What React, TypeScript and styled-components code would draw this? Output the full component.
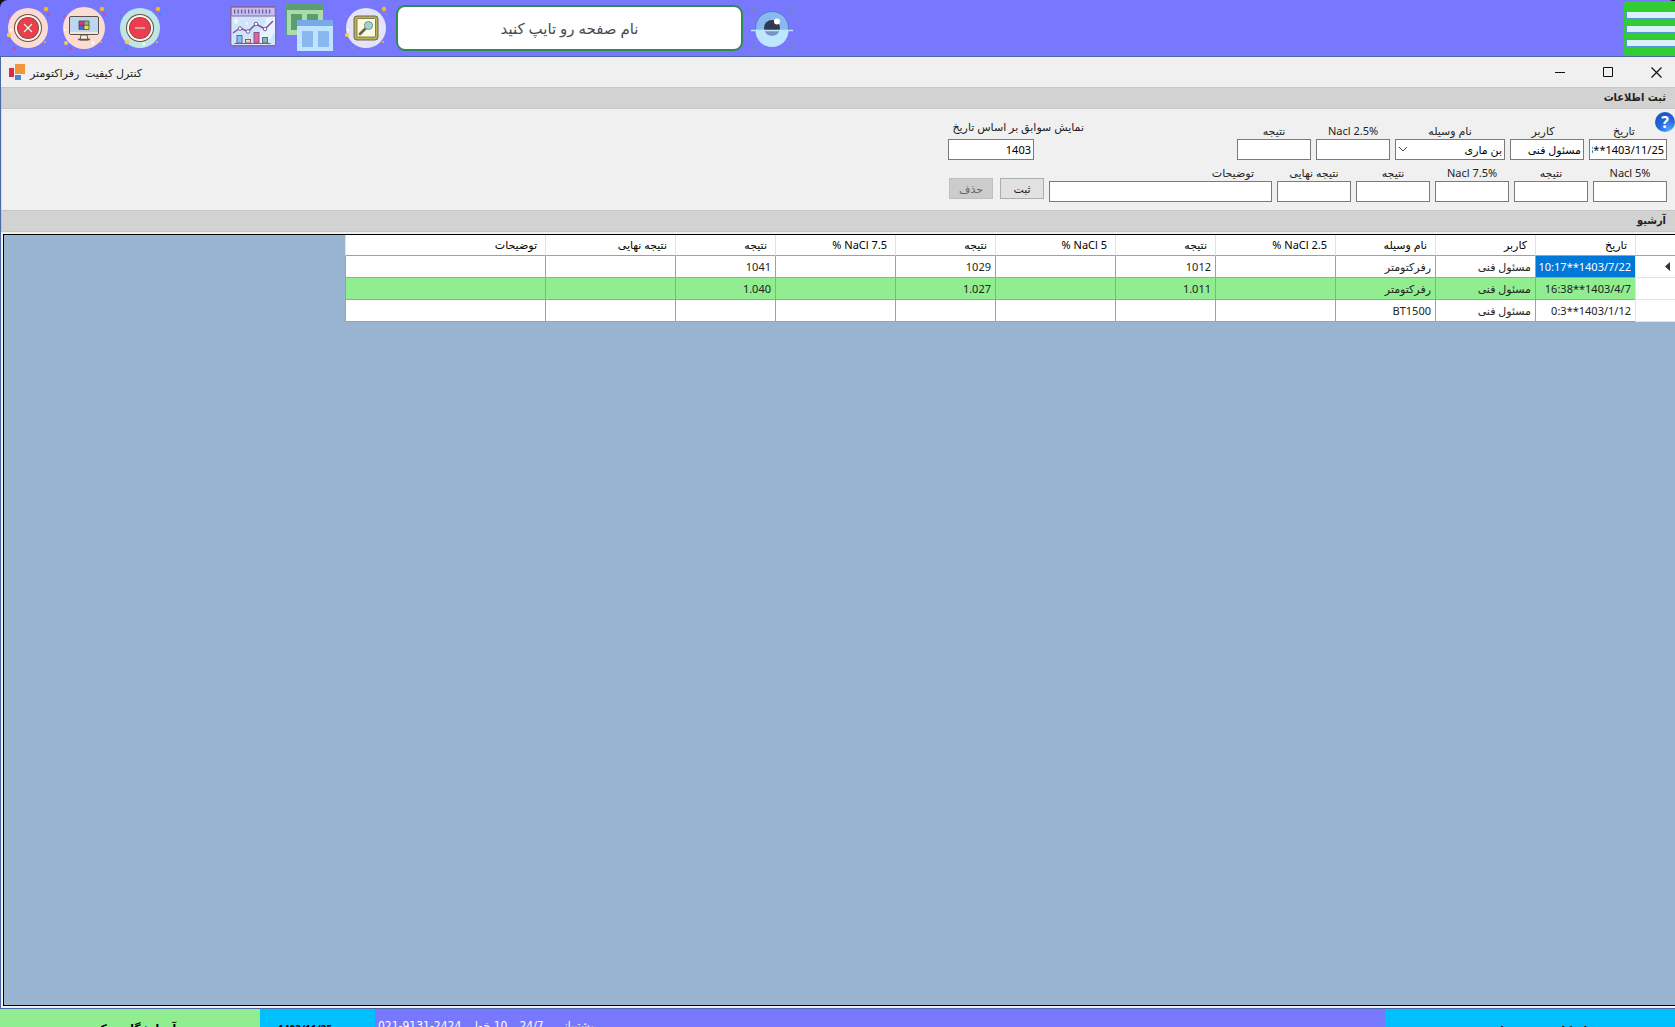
import React from "react";
import styled, { createGlobalStyle } from "styled-components";

const GlobalStyle = createGlobalStyle`
  *, *::before, *::after { box-sizing: border-box; }
  body { margin: 0; background: #111; overflow: hidden; }
  body, button, input, select, table {
    font-family: "Noto Sans", "DejaVu Sans", sans-serif;
    font-size: 11px;
  }
  button { cursor: pointer; }
`;

const Page = styled.div`
  display: flex;
  flex-direction: column;
  height: 100vh;
  overflow: hidden;
`;

/* ---------- top launcher bar ---------- */

const TopBar = styled.header`
  display: flex;
  align-items: center;
  flex: 0 0 56px;
  padding-left: 4px;
  background: #7878ff;
  border-radius: 8px 6px 0 0;
`;

const IconGroup = styled.div<{ $before?: number }>`
  display: flex;
  align-items: center;
  gap: 8px;
  margin-left: ${(p) => p.$before ?? 0}px;
`;

const IconButton = styled.button`
  display: flex;
  padding: 0;
  border: 0;
  background: none;
`;

const PageSearch = styled.input`
  width: 347px;
  height: 46px;
  border: 2px solid #2e8b57;
  border-radius: 9px;
  background: #fff;
  text-align: center;
  font-size: 15px;
  color: #444;
  outline: 0;
  &::placeholder { color: #4a4a4a; opacity: 1; }
`;

const MenuButton = styled.button`
  display: flex;
  flex-direction: column;
  justify-content: center;
  gap: 6px;
  width: 51px;
  height: 55px;
  margin: 1px 0 0 auto;
  padding: 0 0 0 2px;
  border: 0;
  border-radius: 4px 0 0 4px;
  background: #32cd32;
`;

const MenuBar = styled.span`
  height: 8px;
  border: 1px solid #4f9bd0;
  border-right: 0;
  background: #dceffc;
`;

/* ---------- window ---------- */

const Window = styled.main`
  display: flex;
  flex-direction: column;
  flex: 1;
  min-height: 0;
  border: 1px solid #4b6aa5;
  border-right: 0;
  background: #f0f0f0;
`;

const TitleBar = styled.div`
  display: flex;
  align-items: center;
  flex: 0 0 30px;
  padding-left: 8px;
  gap: 5px;
`;

const Title = styled.h1`
  margin: 0;
  font-size: 11px;
  font-weight: 400;
  white-space: pre;
  color: #222;
`;

const Caption = styled.div`
  display: flex;
  gap: 10px;
  margin-left: auto;
`;

const CaptionButton = styled.button`
  display: flex;
  align-items: center;
  justify-content: center;
  width: 38px;
  height: 30px;
  padding: 0;
  border: 0;
  background: none;
`;

const SectionHeader = styled.h2`
  flex: none;
  height: 22px;
  margin: 0;
  padding: 0 9px 0 0;
  border: 1px solid #c6c6c6;
  border-right: 0;
  background: #d2d2d2;
  color: #222;
  font-family: "DejaVu Sans Condensed", "DejaVu Sans", sans-serif;
  font-size: 11px;
  line-height: 20px;
  font-weight: 700;
`;

const EntryForm = styled.form`
  position: relative;
  display: flex;
  flex-direction: column;
  gap: 4px;
  flex: none;
  padding: 6px 8px 8px 0;
  border-left: 1px solid #dcdcdc;
`;

const FormRow = styled.div`
  display: flex;
  align-items: flex-end;
  gap: 5px;
`;

const Field = styled.div<{ $width: number; $align?: string }>`
  display: flex;
  flex-direction: column;
  width: ${(p) => p.$width}px;
  text-align: ${(p) => p.$align ?? "center"};
`;

const Label = styled.label<{ $inset?: number }>`
  padding-right: ${(p) => p.$inset ?? 0}px;
  height: 17px;
  line-height: 17px;
  color: #222;
  white-space: nowrap;
`;

const TextBox = styled.input`
  width: 100%;
  height: 21px;
  padding: 0 2px;
  border: 1px solid #7a7a7a;
  background: #fff;
  color: #000;
  outline: 0;
`;

const SelectWrap = styled.div`
  position: relative;
  display: flex;
`;

const Select = styled.select`
  appearance: none;
  width: 100%;
  height: 21px;
  padding: 0 2px;
  border: 1px solid #7a7a7a;
  border-radius: 0;
  background: #fff;
  color: #000;
`;

const SelectArrow = styled.svg`
  position: absolute;
  left: 3px;
  top: 7px;
  pointer-events: none;
`;

const YearField = styled.div`
  display: flex;
  flex-direction: column;
  align-items: flex-end;
  width: 136px;
  margin-right: 148px;
`;

const YearLabel = styled(Label)`
  align-self: flex-start;
  height: 24px;
  line-height: 24px;
`;

const YearBox = styled(TextBox)`
  width: 86px;
`;

const FormActions = styled.div`
  display: flex;
  gap: 7px;
  padding-bottom: 3px;
`;

const ActionButton = styled.button`
  width: 44px;
  height: 21px;
  padding: 0;
  border: 1px solid #adadad;
  background: #e1e1e1;
  color: #222;
  &:disabled {
    border-color: #bfbfbf;
    background: #cccccc;
    color: #666;
  }
`;

const HelpButton = styled.button`
  position: absolute;
  top: 3px;
  right: 0;
  width: 20px;
  height: 20px;
  padding: 0;
  border: 0;
  border-radius: 50%;
  background: radial-gradient(circle at 70% 90%, #4aa8ff 0%, #2468dc 45%, #1848b8 100%);
  color: #fff;
  font-size: 16px;
  line-height: 20px;
  font-weight: 700;
`;

/* ---------- archive grid ---------- */

const GridFrame = styled.section`
  flex: 1;
  min-height: 0;
  margin: 2px 0 2px 2px;
  border: 1px solid #000;
  border-right: 0;
  background: #99b4d1;
  overflow: hidden;
`;

const Grid = styled.table`
  width: 1330px;
  table-layout: fixed;
  border-collapse: separate;
  border-spacing: 0;
  background: #fff;
  line-height: 16px;
`;

const HeadCell = styled.th`
  height: 21px;
  padding: 0 8px 0 0;
  border-left: 1px solid #e2e2e2;
  border-bottom: 1px solid #a0a0a0;
  font-weight: 400;
  text-align: right;
  color: #000;
`;

const Row = styled.tr<{ $green?: boolean }>`
  background: ${(p) => (p.$green ? "#90ee90" : "#fff")};
`;

const RowHead = styled.th`
  height: 22px;
  padding: 0 5px 0 0;
  background: #fff;
  border-left: 1px solid #e2e2e2;
  border-bottom: 1px solid #e2e2e2;
  text-align: right;
`;

const Cell = styled.td<{ $selected?: boolean }>`
  height: 22px;
  padding: 0 4px 0 0;
  border-left: 1px solid #a0a0a0;
  border-bottom: 1px solid #a0a0a0;
  background: ${(p) => (p.$selected ? "#0078d7" : "transparent")};
  color: ${(p) => (p.$selected ? "#fff" : "#222")};
  text-align: right;
  white-space: nowrap;
`;

/* ---------- status strip ---------- */

const StatusBar = styled.footer`
  display: flex;
  flex: 0 0 18px;
  overflow: hidden;
  font-family: "DejaVu Sans Condensed", "DejaVu Sans", sans-serif;
`;

const StatusPanel = styled.div<{ $width?: number; $color: string; $top?: number }>`
  display: flex;
  flex: ${(p) => (p.$width ? `0 0 ${p.$width}px` : "1")};
  align-items: flex-start;
  justify-content: center;
  height: 40px;
  padding-top: ${(p) => p.$top ?? 12}px;
  background: ${(p) => p.$color};
  color: #000;
  font-size: 12px;
  line-height: 16px;
  font-weight: 700;
  white-space: nowrap;
`;

const DatePanel = styled(StatusPanel)`
  justify-content: flex-start;
  padding-left: 18px;
  font-family: "Noto Sans", sans-serif;
  font-size: 10px;
`;

const SupportPanel = styled(StatusPanel)`
  justify-content: flex-start;
  gap: 12px;
  padding-left: 3px;
  color: #fff;
  font-weight: 400;
`;

/* ---------- drawings ---------- */

const Sparks = ({ a, b }: { a: string; b: string }) => (
  <>
    <circle cx="42" cy="5" r="2.2" fill="#f5b921" />
    <circle cx="44" cy="10" r="1" fill={a} />
    <circle cx="4" cy="12" r="1" fill={a} />
    <circle cx="41" cy="38" r="1.1" fill="#f5b921" />
    <circle cx="10.5" cy="44" r="1" fill={b} />
  </>
);

const CloseIcon = () => (
  <svg width="48" height="48" viewBox="0 0 48 48">
    <circle cx="24" cy="24" r="20" fill="#fadcd2" />
    <circle cx="24" cy="24" r="14" fill="#6b4b45" />
    <circle cx="24" cy="24" r="13" fill="#fff8ea" />
    <circle cx="24" cy="24" r="11" fill="#6b4b45" />
    <circle cx="24" cy="24" r="10.4" fill="#f03a50" />
    <path d="M20 20l8 8M28 20l-8 8" stroke="#6b4b45" strokeWidth="2.4" />
    <path d="M20 20l8 8M28 20l-8 8" stroke="#fff3d8" strokeWidth="1.5" />
    <circle cx="5" cy="31" r="2.2" fill="#fbc94c" />
    <circle cx="7" cy="26" r="1.3" fill="#fff" />
    <Sparks a="#f03a50" b="#f03a50" />
  </svg>
);

const MinusIcon = () => (
  <svg width="48" height="48" viewBox="0 0 48 48">
    <circle cx="24" cy="24" r="20" fill="#bfe5e4" />
    <circle cx="24" cy="24" r="14" fill="#6b4b45" />
    <circle cx="24" cy="24" r="13" fill="#fff8ea" />
    <circle cx="24" cy="24" r="11" fill="#6b4b45" />
    <circle cx="24" cy="24" r="10.4" fill="#f03a50" />
    <path d="M19 24h10" stroke="#c5a99e" strokeWidth="2" />
    <circle cx="11" cy="38" r="2.2" fill="#fbc94c" />
    <circle cx="28" cy="40" r="1.5" fill="#fff" />
    <Sparks a="#1a9aa8" b="#1a9aa8" />
  </svg>
);

const MonitorIcon = () => (
  <svg width="48" height="48" viewBox="0 0 48 48">
    <circle cx="24" cy="24" r="21" fill="#fadcd2" />
    <path d="M21 31h6l1 5h-8z" fill="#f7f2dc" stroke="#6b5550" />
    <path d="M18 35.500h12" stroke="#6b5550" strokeWidth="1.6" />
    <rect x="9.500" y="12.500" width="29" height="18" rx="1.5" fill="#bcd6ee" stroke="#5d4e50" />
    <path d="M10 28h28v2H10z" fill="#eee9dc" />
    <rect x="19" y="17" width="5" height="4" fill="#e7337a" />
    <rect x="24" y="17" width="5" height="4" fill="#7cc36b" />
    <rect x="19" y="21" width="5" height="4" fill="#4a6bd8" />
    <rect x="24" y="21" width="5" height="4" fill="#f3dd48" />
    <path d="M19 17h10v8.500H19zM24 17v8.500M19 21.300h10" fill="none" stroke="#554450" strokeWidth=".8" />
    <circle cx="6" cy="39" r="2.1" fill="#fbc94c" />
    <circle cx="33" cy="39" r="1.4" fill="#fff" />
    <circle cx="5" cy="26" r="1" fill="#fff" />
    <Sparks a="#f03a50" b="#f03a50" />
  </svg>
);

const ChartIcon = () => (
  <svg width="48" height="48" viewBox="0 0 48 48">
    <rect x="0.700" y="2.700" width="45" height="39" rx="1.5" fill="#cfe5fb" stroke="#8568ac" strokeWidth="1.4" />
    <path d="M22 41L40 12h5v16l-9 13z" fill="#e4f3ff" />
    <path d="M1.200 3.200h44V12h-44z" fill="#c5bff0" stroke="#8568ac" />
    <path d="M4 7.500h38" stroke="#705c91" strokeWidth="4" strokeDasharray="1.300 2.200" />
    <path d="M3 29l7-5 8 3.500 8-7.500 9 5 8-8" fill="none" stroke="#8253a0" strokeWidth="1.500" />
    <g fill="#fff" stroke="#8253a0">
      <circle cx="10" cy="24.500" r="1.800" />
      <circle cx="18" cy="27.500" r="1.800" />
      <circle cx="26" cy="20" r="1.800" />
      <circle cx="35" cy="25" r="1.800" />
    </g>
    <g stroke="#8253a0">
      <rect x="7" y="31.500" width="5" height="7.500" fill="#78c9ee" />
      <rect x="15.500" y="35.500" width="5" height="3.500" fill="#f5dc80" />
      <rect x="24" y="28.500" width="5" height="10.500" fill="#ec6287" />
      <rect x="32.500" y="33.500" width="5" height="5.500" fill="#6cc4a4" />
      <path d="M4.500 39.500h36" />
    </g>
    <path d="M6 14v6M3 17h6M17 18v3M37 14v4" stroke="#fff" strokeWidth="1.200" />
  </svg>
);

const WindowsIcon = () => (
  <svg width="48" height="50" viewBox="0 0 48 50">
    <rect x="0" y="1" width="37" height="31" fill="#a8dca8" />
    <rect x="0" y="1" width="37" height="6" fill="#5c9e73" />
    <path d="M0 1h1v31H0z" fill="#5c9e73" />
    <path d="M5 11h11v16H5zM21 11h11v10H21z" fill="#5c9e73" />
    <rect x="11" y="17" width="36" height="31" fill="#bee4ff" />
    <rect x="11" y="17" width="36" height="6" fill="#79a9e8" />
    <path d="M16 28h11v16H16zM32 28h11v16H32z" fill="#8ab7f0" />
  </svg>
);

const FindIcon = () => (
  <svg width="48" height="48" viewBox="0 0 48 48">
    <circle cx="24" cy="24" r="20" fill="#e4e3f7" />
    <rect x="12" y="12" width="24" height="24" rx="3" fill="#b7b257" stroke="#6c6843" />
    <rect x="15" y="14.500" width="18.500" height="18.500" rx="1" fill="#fdf9dc" stroke="#6c6843" strokeWidth=".8" />
    <path d="M18 30l5-5" stroke="#696747" strokeWidth="2.800" strokeLinecap="round" />
    <circle cx="26.500" cy="21.500" r="4" fill="#9dd4d7" stroke="#74908c" />
    <circle cx="5" cy="31" r="2.100" fill="#fbc94c" />
    <circle cx="6" cy="26" r="1.100" fill="#fff" />
    <Sparks a="#9892c5" b="#9892c5" />
  </svg>
);

const EyeIcon = () => (
  <svg width="42" height="42" viewBox="0 0 42 42">
    <path d="M1 7V1h6M35 1h6v6M41 35v6h-6M7 41H1v-6" fill="none" stroke="#6d85bf" strokeWidth="1.600" />
    <circle cx="21" cy="21" r="16.500" fill="#8ab8f1" stroke="#4d7fc2" />
    <circle cx="21" cy="21" r="8" fill="#303c4d" />
    <path d="M4.500 23.500h33a16.500 16.500 0 0 1-33 0z" fill="#bfe6ff" />
    <path d="M13.500 23.500h15a8 8 0 0 1-15 0z" fill="#7195c6" />
    <circle cx="26" cy="14.500" r="3" fill="#fff" />
    <path d="M0 23.500h42" stroke="#bfe6ff" strokeWidth="1.400" />
  </svg>
);

const FormsLogo = () => (
  <svg width="16" height="17" viewBox="0 0 16 17">
    <path d="M0 4h5v9H0z" fill="#d2304a" />
    <path d="M6 0h10v10H6z" fill="#f2963c" />
    <path d="M6 11h6v5H6z" fill="#4a88c7" />
  </svg>
);

/* ---------- data ---------- */

type FieldSpec = { id: string; label: string; width: number; value?: string; inset?: number };

const firstRow: FieldSpec[] = [
  { id: "date", label: "تاریخ", width: 78, value: "1403/11/25**3", inset: 8 },
  { id: "user", label: "کاربر", width: 74, value: "مسئول فنی", inset: 8 },
];
const firstRowResults: FieldSpec[] = [
  { id: "nacl25", label: "Nacl 2.5%", width: 74 },
  { id: "result25", label: "نتیجه", width: 74 },
];
const secondRow: FieldSpec[] = [
  { id: "nacl5", label: "Nacl 5%", width: 74 },
  { id: "result5", label: "نتیجه", width: 74 },
  { id: "nacl75", label: "Nacl 7.5%", width: 74 },
  { id: "result75", label: "نتیجه", width: 74 },
  { id: "final", label: "نتیجه نهایی", width: 74 },
];

const columns: [string, number][] = [
  ["تاریخ", 100],
  ["کاربر", 100],
  ["نام وسیله", 100],
  ["NaCl 2.5 %", 120],
  ["نتیجه", 100],
  ["NaCl 5 %", 120],
  ["نتیجه", 100],
  ["NaCl 7.5 %", 120],
  ["نتیجه", 100],
  ["نتیجه نهایی", 130],
  ["توضیحات", 200],
];

const records = [
  ["1403/7/22**10:17", "مسئول فنی", "رفرکتومتر", "", "1012", "", "1029", "", "1041", "", ""],
  ["1403/4/7**16:38", "مسئول فنی", "رفرکتومتر", "", "1.011", "", "1.027", "", "1.040", "", ""],
  ["1403/1/12**0:3", "مسئول فنی", "BT1500", "", "", "", "", "", "", "", ""],
];

const LabeledBox = ({ id, label, width, value, inset }: FieldSpec) => (
  <Field $width={width}>
    <Label htmlFor={id} $inset={inset} dir="auto">{label}</Label>
    <TextBox id={id} defaultValue={value} />
  </Field>
);

export default function App() {
  return (
    <Page>
      <GlobalStyle />
      <TopBar>
        <IconGroup>
          <IconButton aria-label="بستن"><CloseIcon /></IconButton>
          <IconButton aria-label="نمایش دسکتاپ"><MonitorIcon /></IconButton>
          <IconButton aria-label="کوچک کردن"><MinusIcon /></IconButton>
        </IconGroup>
        <IconGroup $before={66}>
          <IconButton aria-label="نمودار"><ChartIcon /></IconButton>
          <IconButton aria-label="پنجره ها"><WindowsIcon /></IconButton>
          <IconButton aria-label="جستجو"><FindIcon /></IconButton>
        </IconGroup>
        <IconGroup $before={6}>
          <PageSearch dir="rtl" aria-label="نام صفحه" placeholder="نام صفحه رو تایپ کنید" />
          <IconButton aria-label="نمایش"><EyeIcon /></IconButton>
        </IconGroup>
        <MenuButton aria-label="منو">
          <MenuBar /><MenuBar /><MenuBar />
        </MenuButton>
      </TopBar>

      <Window>
        <TitleBar>
          <FormsLogo />
          <Title dir="rtl">{"کنترل کیفیت  رفراکتومتر"}</Title>
          <Caption>
            <CaptionButton aria-label="Minimize">
              <svg width="10" height="10"><path d="M0 5.500h10" stroke="#111" /></svg>
            </CaptionButton>
            <CaptionButton aria-label="Maximize">
              <svg width="10" height="10"><path d="M.5.5h9v9h-9z" fill="none" stroke="#111" /></svg>
            </CaptionButton>
            <CaptionButton aria-label="Close">
              <svg width="11" height="11"><path d="M.5.5l10 10M10.500.5l-10 10" stroke="#111" strokeWidth="1.200" /></svg>
            </CaptionButton>
          </Caption>
        </TitleBar>

        <SectionHeader dir="rtl">ثبت اطلاعات</SectionHeader>
        <EntryForm dir="rtl" onSubmit={(e) => e.preventDefault()}>
          <HelpButton type="button" aria-label="راهنما">?</HelpButton>
          <FormRow>
            {firstRow.map((f) => <LabeledBox key={f.id} {...f} />)}
            <Field $width={110}>
              <Label htmlFor="device">نام وسیله</Label>
              <SelectWrap>
                <Select id="device" defaultValue="بن ماری">
                  <option>بن ماری</option>
                  <option>رفرکتومتر</option>
                </Select>
                <SelectArrow width="10" height="7" viewBox="0 0 10 7">
                  <path d="M1 1l4 4 4-4" fill="none" stroke="#444" />
                </SelectArrow>
              </SelectWrap>
            </Field>
            {firstRowResults.map((f) => <LabeledBox key={f.id} {...f} />)}
            <YearField>
              <YearLabel htmlFor="year">نمایش سوابق بر اساس تاریخ</YearLabel>
              <YearBox id="year" defaultValue="1403" />
            </YearField>
          </FormRow>
          <FormRow>
            {secondRow.map((f) => <LabeledBox key={f.id} {...f} />)}
            <Field $width={223} $align="right">
              <Label htmlFor="notes" $inset={18}>توضیحات</Label>
              <TextBox id="notes" />
            </Field>
            <FormActions>
              <ActionButton type="submit">ثبت</ActionButton>
              <ActionButton type="button" disabled>حذف</ActionButton>
            </FormActions>
          </FormRow>
        </EntryForm>

        <SectionHeader dir="rtl">آرشیو</SectionHeader>
        <GridFrame dir="rtl">
          <Grid>
            <colgroup>
              <col width={40} />
              {columns.map(([, w], i) => <col key={i} width={w} />)}
            </colgroup>
            <thead>
              <tr>
                <HeadCell />
                {columns.map(([name], i) => <HeadCell key={i} scope="col">{name}</HeadCell>)}
              </tr>
            </thead>
            <tbody>
              {records.map((r, ri) => (
                <Row key={ri} $green={ri === 1}>
                  <RowHead scope="row">
                    {ri === 0 && (
                      <svg width="5" height="9" viewBox="0 0 5 9">
                        <path d="M5 0v9L0 4.500z" fill="#333" />
                      </svg>
                    )}
                  </RowHead>
                  {r.map((v, ci) => <Cell key={ci} $selected={ri === 0 && ci === 0}>{v}</Cell>)}
                </Row>
              ))}
            </tbody>
          </Grid>
        </GridFrame>
      </Window>

      <StatusBar>
        <StatusPanel $width={260} $color="#90ee90" dir="rtl">آزمایشگاه مرکزی</StatusPanel>
        <DatePanel $width={115} $color="#00bfff">1403/11/25</DatePanel>
        <SupportPanel $color="#7878ff" $top={9}>
          <span>021-9131-2424</span>
          <span dir="rtl">10 خط</span>
          <span>24/7</span>
          <span dir="rtl">پشتیبانی</span>
        </SupportPanel>
        <StatusPanel $width={290} $color="#00bfff" $top={14} dir="rtl">نام کاربر : مسئول فنی</StatusPanel>
      </StatusBar>
    </Page>
  );
}
